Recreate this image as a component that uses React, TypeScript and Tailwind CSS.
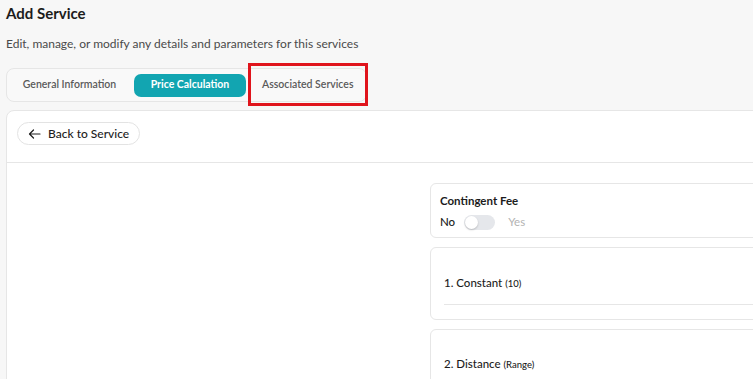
import React, { useState } from "react";

export default function App() {
  const [tab] = useState("price");
  const [contingent, setContingent] = useState(false);

  const tabs = [
    { id: "general", label: "General Information" },
    { id: "price", label: "Price Calculation" },
    { id: "associated", label: "Associated Services" },
  ];

  return (
    <div className="h-[379px] w-[753px] overflow-hidden bg-[#f7f7f7] font-['Lato',sans-serif] text-[#1c1c1c]">
      <div className="w-[1000px] pl-[6px]">
        <h1 className="pt-[3px] text-[15px] font-bold leading-[20px]">Add Service</h1>
        <p className="mt-[13px] text-[12px] leading-[16px] text-[#4a4a4a]">
          Edit, manage, or modify any details and parameters for this services
        </p>

        <div className="relative mt-[16px] flex h-[34px] w-[361px] items-center rounded-[8px] border border-[#e6e6e6] bg-[#f9f9f9] pl-[4px]">
          {tabs.map((t) =>
            t.id === tab ? (
              <button
                key={t.id}
                className="ml-[6px] h-[23px] w-[112px] rounded-[7px] bg-[#12a5b1] text-[10.5px] font-bold text-white"
              >
                {t.label}
              </button>
            ) : (
              <button
                key={t.id}
                className={
                  t.id === "general"
                    ? "h-[23px] w-[117px] text-[10.5px] font-semibold text-[#5a5a5a]"
                    : "ml-[10px] h-[23px] px-[6px] text-[10.5px] font-semibold text-[#5a5a5a]"
                }
              >
                {t.label}
              </button>
            )
          )}
          {/* highlight annotation */}
          <div className="pointer-events-none absolute left-[241px] top-[-6px] h-[43px] w-[120px] border-[3px] border-[#e0141c]" />
        </div>

        <div className="mt-[8px] rounded-tl-[8px] border border-[#e6e6e6] bg-white">
          <div className="border-b border-[#e6e6e6] px-[10px] pb-[17px] pt-[11px]">
            <button className="flex h-[23px] items-center gap-[7px] rounded-full border border-[#e3e3e3] px-[10px] text-[12px] font-medium text-[#1c1c1c]">
              <svg width="13" height="10" viewBox="0 0 13 10" fill="none" stroke="#1c1c1c" strokeWidth="1.2">
                <path d="M12 5H1.5M5.5 1L1.5 5l4 4" strokeLinecap="round" strokeLinejoin="round" />
              </svg>
              Back to Service
            </button>
          </div>

          <div className="grid grid-cols-[423px_1fr] pt-[20px]">
            <div />
            <div className="flex flex-col gap-[9px] pr-[10px]">
              <div className="rounded-[6px] border border-[#e6e6e6] px-[9px] pb-[7px] pt-[9px]">
                <div className="text-[11.5px] font-bold leading-[16px]">Contingent Fee</div>
                <div className="mt-[5px] flex items-center gap-[9px] text-[11.5px] leading-[16px]">
                  <span className="font-medium">No</span>
                  <button
                    onClick={() => setContingent(!contingent)}
                    className="relative h-[15px] w-[31px] rounded-full bg-[#e5e7eb]"
                  >
                    <span className="absolute left-[1px] top-[1px] h-[13px] w-[13px] rounded-full bg-white shadow-[0_1px_2px_rgba(0,0,0,0.2)]" />
                  </button>
                  <span className="pl-[4px] text-[#b3b3b3]">Yes</span>
                </div>
              </div>

              <div className="rounded-[6px] border border-[#e6e6e6] px-[13px] pt-[27px]">
                <div className="text-[11.5px] font-medium leading-[16px]">
                  1. Constant <span className="text-[9.5px]">(10)</span>
                </div>
                <div className="mt-[12px] border-b border-[#e6e6e6]" />
                <div className="h-[14px]" />
              </div>

              <div className="rounded-[6px] border border-[#e6e6e6] px-[13px] pt-[26px]">
                <div className="text-[11.5px] font-medium leading-[16px]">
                  2. Distance <span className="text-[9.5px]">(Range)</span>
                </div>
                <div className="h-[60px]" />
              </div>
            </div>
          </div>
        </div>
      </div>
    </div>
  );
}
